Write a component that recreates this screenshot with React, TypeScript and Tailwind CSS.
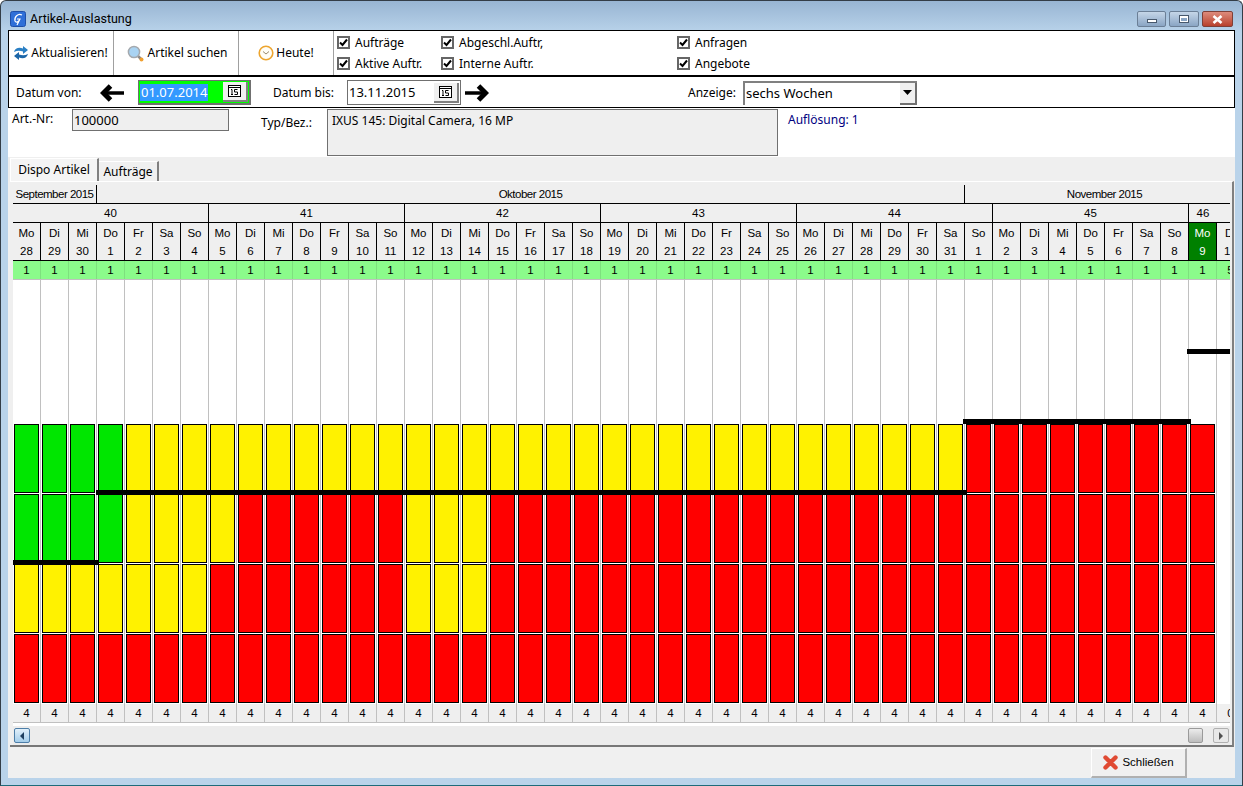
import React from 'react';

const UI_FONT = "font-['Noto_Sans',sans-serif]";
const GRID_FONT = "font-['Liberation_Sans',sans-serif]";

const WEEKDAYS = ['Mo', 'Di', 'Mi', 'Do', 'Fr', 'Sa', 'So'];

// 28.09. - 10.11.2015
const DATES = [
  28, 29, 30,
  ...Array.from({ length: 31 }, (_, i) => i + 1),
  ...Array.from({ length: 10 }, (_, i) => i + 1),
];

const TODAY_INDEX = 42;

const BAR_COLORS: Record<string, string> = {
  G: 'bg-[#00e600]',
  Y: 'bg-[#fff200]',
  R: 'bg-[#ff0000]',
};

// stacks from top to bottom, one per day
function stackFor(index: number): string {
  if (index <= 3) return 'GGYR';
  if (index <= 6) return 'YYYR';
  if (index === 7) return 'YYRR';
  if (index >= 14 && index <= 16) return 'YYYR';
  if (index <= 33) return 'YRRR';
  if (index <= 42) return 'RRRR';
  return '';
}

function CheckBox({ label }: { label: string }) {
  return (
    <div className="flex items-center gap-[5px] h-[21px]">
      <span className="w-[13px] h-[13px] border-2 border-[#666666] bg-white flex items-center justify-center">
        <svg width="9" height="9" viewBox="0 0 9 9">
          <path d="M1 4.5 L3.5 7 L8 1.5" fill="none" stroke="#000" strokeWidth="2" />
        </svg>
      </span>
      <span>{label}</span>
    </div>
  );
}

function RefreshIcon() {
  return (
    <svg width="16" height="16" viewBox="0 0 16 16">
      <path d="M1 7 C2 3 6 2 10 3.5 L10 1 L15 5 L10 9 L10 6.5 C7 5.5 4 5.5 1 7 Z" fill="#2a7fc4" />
      <path d="M15 9 C14 13 10 14 6 12.5 L6 15 L1 11 L6 7 L6 9.5 C9 10.5 12 10.5 15 9 Z" fill="#1c66a8" />
    </svg>
  );
}

function SearchIcon() {
  return (
    <svg width="17" height="17" viewBox="0 0 17 17">
      <line x1="10.5" y1="10.5" x2="14.5" y2="14.5" stroke="#8a8a8a" strokeWidth="2.5" />
      <circle cx="7" cy="7" r="5.6" fill="#a9d3f2" stroke="#a4a9ae" strokeWidth="1.5" />
      <circle cx="14.5" cy="14.5" r="2" fill="#f0a030" />
    </svg>
  );
}

function ClockIcon() {
  return (
    <svg width="16" height="16" viewBox="0 0 16 16">
      <circle cx="8" cy="8" r="6.8" fill="#fffdf6" stroke="#eda52f" strokeWidth="1.6" />
      <path d="M5 6.5 L8 9 L11 6.5" fill="none" stroke="#9a8a70" strokeWidth="1" />
    </svg>
  );
}

function ArrowIcon({ flip }: { flip?: boolean }) {
  return (
    <svg width="24" height="18" viewBox="0 0 24 18" className={flip ? 'rotate-180' : ''}>
      <path d="M10.5 2 L3.5 9 L10.5 16" fill="none" stroke="#000" strokeWidth="5" />
      <path d="M3 9 L24 9" fill="none" stroke="#000" strokeWidth="3.6" />
    </svg>
  );
}

function CalendarButton() {
  return (
    <span className="w-[25px] h-[20px] bg-[#f0f0f0] border-r-2 border-b-2 border-[#808080] flex items-center justify-center">
      <svg width="13" height="12" viewBox="0 0 13 12">
        <rect x="0.5" y="0.5" width="12" height="11" fill="#fff" stroke="#000" />
        <line x1="0" y1="2.5" x2="13" y2="2.5" stroke="#000" />
        <path d="M3 4.5 L4 4.5 L4 9.5 M3 9.5 L5 9.5 M6.5 4.5 L9.5 4.5 M6.5 4.5 L6.5 7 L9.5 7 L9.5 9.5 L6.5 9.5" fill="none" stroke="#000" />
      </svg>
    </span>
  );
}

function WindowButtons() {
  const base = 'h-[16px] rounded-[2px] border border-[#6b7f96] flex items-center justify-center';
  return (
    <div className="flex gap-[3px] mt-[10px] mr-[2px]">
      <div className={`${base} w-[29px] bg-linear-to-b from-[#c5d6e8] to-[#8aa5c4]`}>
        <span className="w-[10px] h-[4px] mt-[4px] bg-white border border-[#47586c]" />
      </div>
      <div className={`${base} w-[30px] bg-linear-to-b from-[#c5d6e8] to-[#8aa5c4]`}>
        <span className="w-[10px] h-[8px] bg-white border border-[#47586c] flex items-center justify-center">
          <span className="w-[6px] h-[3px] bg-[#8aa5c4]" />
        </span>
      </div>
      <div className={`${base} w-[31px] bg-linear-to-b from-[#dd8b7c] to-[#b8402c] border-[#7e4038]`}>
        <svg width="11" height="9" viewBox="0 0 11 9">
          <path d="M1.5 1 L9.5 8 M9.5 1 L1.5 8" stroke="#fff" strokeWidth="2.6" />
        </svg>
      </div>
    </div>
  );
}

function WeekRow() {
  const weeks = [40, 41, 42, 43, 44, 45];
  return (
    <div className="flex h-[19px] border-b border-black">
      {weeks.map((w) => (
        <div key={w} className="w-[196px] shrink-0 border-r border-black text-center leading-[18px]">
          {w}
        </div>
      ))}
      <div className="w-[28px] shrink-0 text-center leading-[18px]">46</div>
    </div>
  );
}

function DayRow() {
  return (
    <div className="flex h-[38px] border-b border-black">
      {DATES.map((d, i) => (
        <div
          key={i}
          className={`w-[28px] shrink-0 border-r border-black text-center leading-[18px] pt-px ${
            i === TODAY_INDEX ? 'bg-[#008000] text-white' : ''
          }`}
        >
          <div>{WEEKDAYS[i % 7]}</div>
          <div>{d}</div>
        </div>
      ))}
    </div>
  );
}

function Chart() {
  return (
    <div className="relative flex h-[424px] bg-white">
      {DATES.map((_, i) => (
        <div key={i} className="w-[28px] shrink-0 border-r border-[#c0c0c0] flex flex-col justify-end pl-px pb-px">
          {stackFor(i)
            .split('')
            .map((c, n) => (
              <div key={n} className={`w-[25px] h-[69px] mt-px border border-black ${BAR_COLORS[c]}`} />
            ))}
        </div>
      ))}
      {/* capacity lines */}
      <div className="absolute left-0 top-[280px] w-[86px] h-[5px] bg-black" />
      <div className="absolute left-[83px] top-[210px] w-[871px] h-[5px] bg-black" />
      <div className="absolute left-[950px] top-[139px] w-[228px] h-[5px] bg-black" />
      <div className="absolute left-[1174px] top-[69px] w-[43px] h-[5px] bg-black" />
    </div>
  );
}

export default function App() {
  return (
    <div
      className={`w-[1243px] h-[786px] overflow-hidden flex flex-col rounded-t-[6px] border border-[#333d47] border-b-[#1e6b7a] bg-linear-to-b from-[#98b5d3] from-0% to-[#b9d3ea] to-[4%] text-[12px] text-black ${UI_FONT}`}
    >
      {/* title bar */}
      <div className="h-[29px] flex justify-between pl-[9px] pr-[7px] shrink-0">
        <div className="flex items-center gap-[4px] mt-[6px] h-[24px]">
          <svg width="16" height="16" viewBox="0 0 16 16">
            <rect x="0.5" y="0.5" width="15" height="15" rx="2" fill="#2f6fd8" stroke="#1f4fa8" />
            <path d="M12 4 C8 2 4 6 5 10 C6 12 9 11 10 8 L7 8 M10 8 L7 14" fill="none" stroke="#fff" strokeWidth="1.2" />
          </svg>
          <span className="font-['Roboto',sans-serif] text-[12.5px]">Artikel-Auslastung</span>
        </div>
        <WindowButtons />
      </div>

      <div className="flex-1 flex flex-col mx-[7px] bg-[#f0f0f0] min-h-0">
        {/* toolbar */}
        <div className="h-[47px] shrink-0 flex bg-white border-x border-t border-b-2 border-black">
          <div className="w-[105px] flex items-center justify-center gap-[2px] pr-[1px] border-r border-[#a0a0a0]">
            <RefreshIcon />
            <span>Aktualisieren!</span>
          </div>
          <div className="w-[125px] flex items-center justify-center gap-[4px] pl-[2px] border-r border-[#a0a0a0]">
            <SearchIcon />
            <span>Artikel suchen</span>
          </div>
          <div className="w-[95px] flex items-center justify-center gap-[2px] border-r border-[#a0a0a0]">
            <ClockIcon />
            <span>Heute!</span>
          </div>
          <div className="grid grid-cols-[104px_236px_120px] content-center pl-[3px]">
            <CheckBox label="Aufträge" />
            <CheckBox label="Abgeschl.Auftr," />
            <CheckBox label="Anfragen" />
            <CheckBox label="Aktive Auftr." />
            <CheckBox label="Interne Auftr." />
            <CheckBox label="Angebote" />
          </div>
        </div>

        {/* date row */}
        <div className="h-[31px] shrink-0 flex items-center pt-px bg-white border-x border-b border-black">
          <span className="ml-[7px] w-[84px]">Datum von:</span>
          <ArrowIcon />
          <div className="ml-[14px] w-[113px] h-[25px] border border-[#707070] border-r-2 border-b-2 bg-[#00ff00] flex items-center justify-between pr-[1px]">
            <span className="ml-px bg-[#3399ff] text-white px-[1px] leading-[17px] text-[13px]">01.07.2014</span>
            <CalendarButton />
          </div>
          <span className="ml-[22px] w-[74px]">Datum bis:</span>
          <div className="w-[114px] h-[25px] border border-[#707070] bg-white flex items-center justify-between pr-[1px] pl-[1px]">
            <span className="text-[13px]">13.11.2015</span>
            <CalendarButton />
          </div>
          <span className="ml-[4px]">
            <ArrowIcon flip />
          </span>
          <span className="ml-[199px] w-[55px]">Anzeige:</span>
          <div className="w-[174px] h-[24px] bg-white border-l-2 border-t-2 border-[#808080] flex items-center justify-between">
            <span className="ml-px text-[13px]">sechs Wochen</span>
            <span className="w-[17px] h-[22px] bg-[#f0f0f0] border-r-2 border-b-2 border-[#707070] flex items-center justify-center">
              <svg width="9" height="5" viewBox="0 0 9 5">
                <path d="M0 0 L9 0 L4.5 5 Z" fill="#000" />
              </svg>
            </span>
          </div>
        </div>

        {/* article info */}
        <div className="h-[49px] shrink-0 bg-white flex relative">
          <span className="ml-[4px] mt-[2px] w-[60px]">Art.-Nr:</span>
          <div className="mt-px w-[157px] h-[22px] border border-[#707070] bg-[#efefef] pl-[1px] text-[13px] leading-[21px]">
            100000
          </div>
          <span className="ml-[32px] mt-[6px] w-[66px]">Typ/Bez.:</span>
          <div className="mt-px w-[451px] h-[47px] border border-[#707070] bg-[#efefef] pl-[4px] pt-px leading-[20px]">
            IXUS 145: Digital Camera, 16 MP
          </div>
          <span className="ml-[10px] mt-[3px] text-[#000080]">Auflösung: 1</span>
        </div>

        {/* tabs */}
        <div className="h-[24px] shrink-0 flex items-end pl-[2px] bg-[#efefef]">
          <div className="w-[89px] h-[23px] bg-[#f4f4f4] border-t border-l border-white border-r-2 border-r-[#808080] text-center leading-[22px]">
            Dispo Artikel
          </div>
          <div className="w-[60px] h-[20px] bg-[#f0f0f0] border-t border-white border-r-2 border-r-[#808080] text-center leading-[20px]">
            Aufträge
          </div>
        </div>

        {/* tab panel */}
        <div className={`h-[566px] shrink-0 ml-[2px] mr-px pl-[3px] pr-[3px] pt-[3px] bg-[#efefef] border-t border-white border-b-2 border-b-[#777777] border-r-2 border-r-[#808080] text-[11.5px] ${GRID_FONT}`}>
          <div className="w-[1217px] overflow-hidden">
            <div className="flex h-[19px] border-b border-black whitespace-nowrap tracking-[-0.5px]">
              <div className="w-[84px] shrink-0 border-r border-black text-center leading-[18px]">September 2015</div>
              <div className="w-[868px] shrink-0 border-r border-black text-center leading-[18px]">Oktober 2015</div>
              <div className="flex-1 text-center leading-[18px] pl-[14px]">November 2015</div>
            </div>
            <WeekRow />
            <DayRow />
            <div className="flex h-[19px] bg-[#8bfb8b] border-b border-[#c0c0c0]">
              {DATES.map((_, i) => (
                <div key={i} className="w-[28px] shrink-0 border-r border-[#7ee07e] text-center leading-[18px]">
                  {i === 43 ? 5 : 1}
                </div>
              ))}
            </div>
            <Chart />
            <div className="flex h-[19px] border-b border-[#c0c0c0]">
              {DATES.map((_, i) => (
                <div key={i} className="w-[28px] shrink-0 border-r border-[#c0c0c0] text-center leading-[18px]">
                  {i === 43 ? 0 : 4}
                </div>
              ))}
            </div>
            <div className="h-[3px] bg-white" />
            <div className="h-[19px] flex items-center justify-between bg-[#ececec] pl-px pr-px">
              <span className="w-[16px] h-[15px] rounded-[2px] border border-[#4d7ea8] bg-linear-to-b from-[#e2f0fa] to-[#a4cdea] flex items-center justify-center">
                <svg width="6" height="8" viewBox="0 0 6 8">
                  <path d="M5 0 L1 4 L5 8 Z" fill="#1f3f5f" />
                </svg>
              </span>
              <div className="flex items-center">
                <span className="w-[15px] h-[15px] rounded-[2px] border border-[#9a9a9a] bg-linear-to-b from-[#ececec] to-[#bdbdbd]" />
                <span className="ml-[10px] w-[16px] h-[15px] rounded-[2px] border border-[#b0b0b0] bg-[#e8e8e8] flex items-center justify-center">
                  <svg width="6" height="8" viewBox="0 0 6 8">
                    <path d="M1 0 L5 4 L1 8 Z" fill="#505050" />
                  </svg>
                </span>
              </div>
            </div>
          </div>
        </div>

        {/* status bar */}
        <div className="flex-1 flex justify-end pr-[48px] pt-px">
          <div className={`w-[96px] h-[30px] bg-[#f0f0f0] border-l border-t border-white border-r-2 border-b-2 border-r-[#b0b0b0] border-b-[#b0b0b0] flex items-center justify-center gap-[4px] text-[11.5px] ${GRID_FONT}`}>
            <svg width="15" height="15" viewBox="0 0 15 15">
              <path d="M2.5 2.5 L12.5 12.5 M12.5 2.5 L2.5 12.5" stroke="#e04a33" strokeWidth="4.4" strokeLinecap="round" />
            </svg>
            <span>Schließen</span>
          </div>
        </div>
      </div>
      <div className="h-[7px] shrink-0" />
    </div>
  );
}
